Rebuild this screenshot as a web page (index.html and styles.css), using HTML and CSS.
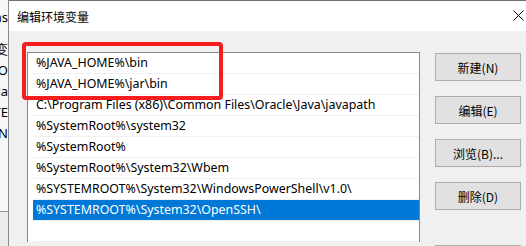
FILE: index.html
```html
<!DOCTYPE html>
<html lang="zh-CN">
<head>
    <meta charset="UTF-8">
    <meta name="viewport" content="width=device-width, initial-scale=1.0">
    <title>编辑环境变量</title>
    <link rel="stylesheet" href="styles.css">
</head>
<body>
    <div class="behind">
        <div class="behind-text">
            <span class="b1">Alias</span>
            <span class="b2">变</span>
            <span class="b3">O</span>
            <span class="b4">Pa</span>
            <span class="b5">TE</span>
            <span class="b6">TN</span>
        </div>
        <div class="behind-foot"></div>
    </div>
    <div class="dialog">
        <div class="titlebar">
            <span class="title">编辑环境变量</span>
            <svg class="close" width="11" height="11" viewBox="0 0 11 11">
                <path d="M0.5 0.5 L10.5 10.5 M10.5 0.5 L0.5 10.5" stroke="#000" stroke-width="1" fill="none"/>
            </svg>
        </div>
        <div class="content">
            <div class="list">
                <div class="row">%JAVA_HOME%\bin</div>
                <div class="row">%JAVA_HOME%\jar\bin</div>
                <div class="row">C:\Program Files (x86)\Common Files\Oracle\Java\javapath</div>
                <div class="row">%SystemRoot%\system32</div>
                <div class="row">%SystemRoot%</div>
                <div class="row">%SystemRoot%\System32\Wbem</div>
                <div class="row">%SYSTEMROOT%\System32\WindowsPowerShell\v1.0\</div>
                <div class="row selected">%SYSTEMROOT%\System32\OpenSSH\</div>
                <div class="row"></div>
            </div>
            <div class="buttons">
                <button class="btn">新建(N)</button>
                <button class="btn">编辑(E)</button>
                <button class="btn">浏览(B)...</button>
                <button class="btn">删除(D)</button>
                <button class="btn spaced">上移(U)</button>
            </div>
        </div>
        <div class="highlight"></div>
    </div>
</body>
</html>
```

FILE: styles.css
```css
body {
    margin: 0;
    width: 526px;
    height: 246px;
    overflow: hidden;
    display: flex;
    font-family: "Noto Sans", "Noto Sans CJK SC", sans-serif;
    font-size: 12.4px;
    color: #000;
    background: #f0f0f0;
}
.behind {
    width: 8px;
    flex-shrink: 0;
    display: flex;
    flex-direction: column;
    background: #f7f7f7;
    border-right: 1px solid #8c8c8c;
}
.behind-text {
    height: 211px;
    flex-shrink: 0;
    display: flex;
    flex-direction: column;
    align-items: flex-end;
    overflow: hidden;
}
.behind-text span {
    white-space: nowrap;
    line-height: 21px;
    font-size: 13px;
}
.b1 { margin-top: 7px; }
.b2 { margin-top: 11px; }
.behind-foot {
    flex: 1;
    border-top: 1px solid #9a9a9a;
    background: #ececec;
}
.dialog {
    position: relative;
    flex: 1;
    min-width: 0;
    display: flex;
    flex-direction: column;
    border-top: 1px solid #707070;
}
.titlebar {
    height: 30px;
    flex-shrink: 0;
    background: #fff;
    display: flex;
    align-items: center;
    justify-content: space-between;
    padding: 0 2px 0 8px;
}
.title {
    font-family: "Noto Sans CJK SC", sans-serif;
    font-size: 12px;
    margin-top: 1px;
}
.close {
    margin-top: -1px;
}
.content {
    flex: 1;
    min-height: 0;
    overflow: hidden;
    display: flex;
    align-items: flex-start;
    padding: 21px 0 0 18px;
    background: #f0f0f0;
}
.list {
    width: 386px;
    flex-shrink: 0;
    padding: 0 0 0 5px;
    border: 1px solid #828790;
    border-bottom: none;
    background: #fff;
}
.row {
    height: 20px;
    line-height: 20px;
    padding-left: 3px;
    border-bottom: 1px solid #f0f0f0;
    white-space: nowrap;
    overflow: hidden;
}
.row.selected {
    background: #0078d7;
    color: #fff;
}
.buttons {
    display: flex;
    flex-direction: column;
    flex-shrink: 0;
    gap: 15px;
    margin-left: 15px;
    padding-top: 1px;
}
.btn {
    width: 86px;
    height: 28px;
    flex-shrink: 0;
    padding: 0;
    background: #e1e1e1;
    border: 1px solid #adadad;
    font-family: "Noto Sans CJK SC", sans-serif;
    font-size: 12px;
    color: #000;
}
.btn.spaced {
    margin-top: 20px;
}
.highlight {
    position: absolute;
    left: 13px;
    top: 41px;
    width: 193px;
    height: 50px;
    border: 4px solid #f51e1e;
    border-radius: 4px;
}
```
